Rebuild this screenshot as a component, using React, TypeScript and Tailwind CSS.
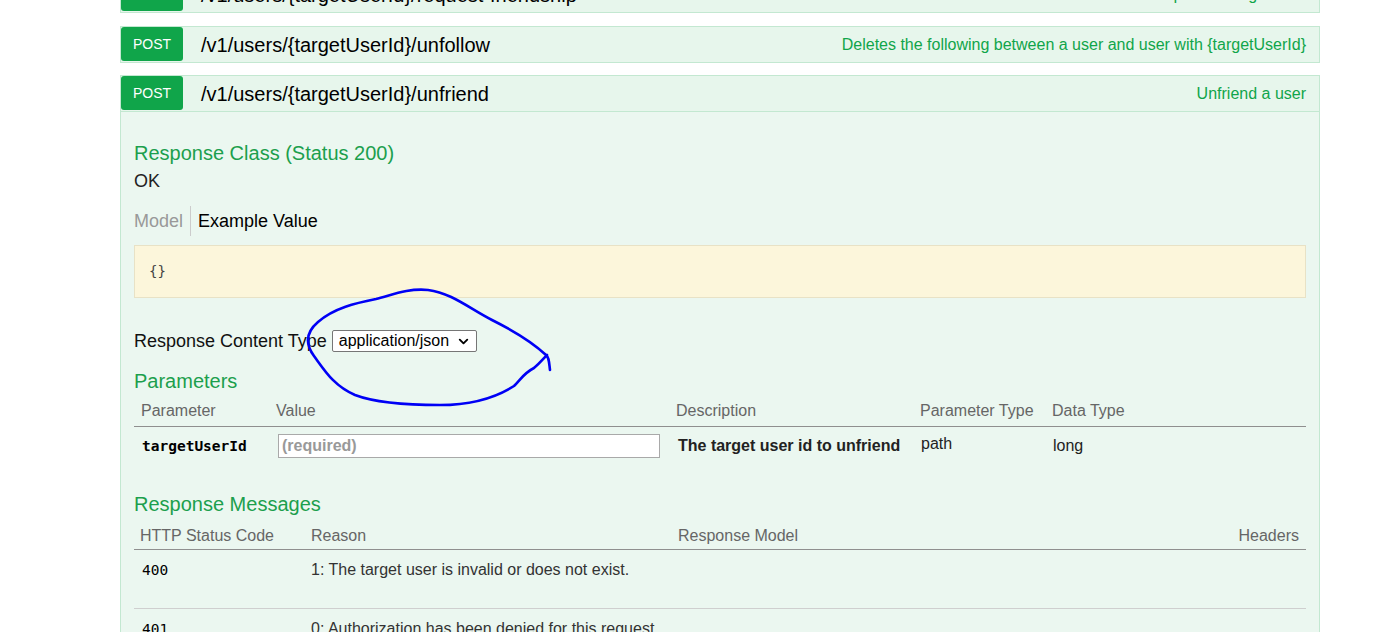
import { ChevronDown } from 'lucide-react'

const sans = "font-['Liberation_Sans',Arial,sans-serif]"
const mono = "font-['DejaVu_Sans_Mono','Liberation_Mono',monospace]"

interface OpProps {
  path: string
  summary: string
}

function OpHeading({ path, summary }: OpProps) {
  return (
    <div className="flex h-[37px] items-center border border-[#c3e8d1] bg-[#e7f6ec]">
      <span className="flex h-[34px] w-[62px] shrink-0 items-center justify-center self-start rounded-[3px] bg-[#10a54a] text-[14px] text-white">
        POST
      </span>
      <span className="ml-[18px] text-[20px] leading-[24px] text-black">{path}</span>
      <span className="ml-auto mr-[13px] text-[16px] leading-[20px] text-[#10a54a]">{summary}</span>
    </div>
  )
}

function Heading({ children }: { children: string }) {
  return <h4 className="text-[20px] leading-[24px] text-[#1c9f4d]">{children}</h4>
}

const paramCols = 'grid grid-cols-[136px_400px_244px_132px_1fr]'
const msgCols = 'grid grid-cols-[171px_367px_1fr_auto]'

export default function App() {
  return (
    <div className={`relative h-[632px] w-full overflow-hidden bg-white ${sans}`}>
      <div className="ml-[120px] mt-[-24px] flex w-[1200px] flex-col gap-[13px]">
        <OpHeading
          path="/v1/users/{targetUserId}/request-friendship"
          summary="Send a friend request to target user"
        />
        <OpHeading
          path="/v1/users/{targetUserId}/unfollow"
          summary="Deletes the following between a user and user with {targetUserId}"
        />

        <div className="mt-[-1px]">
          <OpHeading path="/v1/users/{targetUserId}/unfriend" summary="Unfriend a user" />

          {/* expanded operation body */}
          <div className="border-x border-[#c3e8d1] bg-[#ebf7f0] px-[13px] pb-[40px] pt-[29px]">
            <Heading>Response Class (Status 200)</Heading>
            <p className="mt-[5px] text-[18px] leading-[22px] text-[#222]">OK</p>

            <div className="mt-[14px] flex h-[30px] items-center text-[18px]">
              <span className="pr-[7px] text-[#999]">Model</span>
              <span className="h-[30px] w-px bg-[#ccc]" />
              <span className="pl-[7px] text-black">Example Value</span>
            </div>

            <div className="mt-[9px] flex h-[53px] items-center border border-[#e8e2c6] bg-[#fcf6db] pl-[14px]">
              <span className={`${mono} text-[14px] text-[#444]`}>{'{}'}</span>
            </div>

            <div className="mt-[32px] flex h-[22px] items-center gap-[5px] text-[18px] text-[#111]">
              <span>Response Content Type</span>
              <div className="flex h-[22px] w-[145px] items-center justify-between rounded-[2px] border border-[#767676] bg-white pl-[6px] pr-[5px] text-[16px] text-black">
                application/json
                <ChevronDown size={15} strokeWidth={3} />
              </div>
            </div>

            <div className="mt-[17px]">
              <Heading>Parameters</Heading>
            </div>

            <div className={`${paramCols} h-[34px] items-end border-b border-[#8f8f8f] pb-[5px] text-[16px] leading-[20px] text-[#666]`}>
              <span className="px-[7px]">Parameter</span>
              <span className="px-[6px]">Value</span>
              <span className="px-[6px]">Description</span>
              <span className="px-[6px]">Parameter Type</span>
              <span className="px-[6px]">Data Type</span>
            </div>
            <div className={`${paramCols} h-[38px] items-center text-[16px] leading-[20px] text-[#222]`}>
              <span className={`${mono} px-[8px] text-[14.5px] font-bold text-black`}>targetUserId</span>
              <span className="pl-[8px]">
                <input
                  placeholder="(required)"
                  className="h-[24px] w-[382px] border border-[#a9a9a9] bg-white px-[3px] text-[16px] font-bold placeholder:text-[#999]"
                />
              </span>
              <span className="px-[8px] font-bold">The target user id to unfriend</span>
              <span className="mt-[-4px] px-[7px]">path</span>
              <span className="px-[7px]">long</span>
            </div>

            <div className="mt-[27px]">
              <Heading>Response Messages</Heading>
            </div>

            <div className={`${msgCols} h-[34px] items-end border-b border-[#8f8f8f] pb-[3px] text-[16px] leading-[20px] text-[#666]`}>
              <span className="px-[6px]">HTTP Status Code</span>
              <span className="px-[6px]">Reason</span>
              <span className="px-[6px]">Response Model</span>
              <span className="px-[7px] text-right">Headers</span>
            </div>
            {[
              ['400', '1: The target user is invalid or does not exist.'],
              ['401', '0: Authorization has been denied for this request.'],
            ].map(([code, reason]) => (
              <div
                key={code}
                className={`${msgCols} h-[59px] items-start border-b border-[#cfcfcf] pt-[10px] text-[16px] leading-[20px] text-[#333]`}
              >
                <span className={`${mono} px-[8px] text-[14.5px] text-black`}>{code}</span>
                <span className="px-[6px]">{reason}</span>
                <span />
                <span />
              </div>
            ))}
          </div>
        </div>
      </div>

      {/* hand-drawn marker annotation */}
      <svg
        className="pointer-events-none absolute left-0 top-0"
        width="1395"
        height="632"
        viewBox="0 0 1395 632"
        fill="none"
      >
        <path
          d="M550 370 C549 362 549 357 546 355 C530 340 512 330 492 320 C470 309 452 293 428 290 C408 288 392 295 376 299 C356 303 334 308 318 322 C305 333 306 345 314 356 C325 371 334 386 355 395 C376 403 406 405 440 405 C470 405 495 398 514 386 C521 379 524 373 534 368 C540 363 543 359 547 355"
          stroke="#0000f5"
          strokeWidth="2.6"
          strokeLinecap="round"
          strokeLinejoin="round"
        />
      </svg>
    </div>
  )
}
